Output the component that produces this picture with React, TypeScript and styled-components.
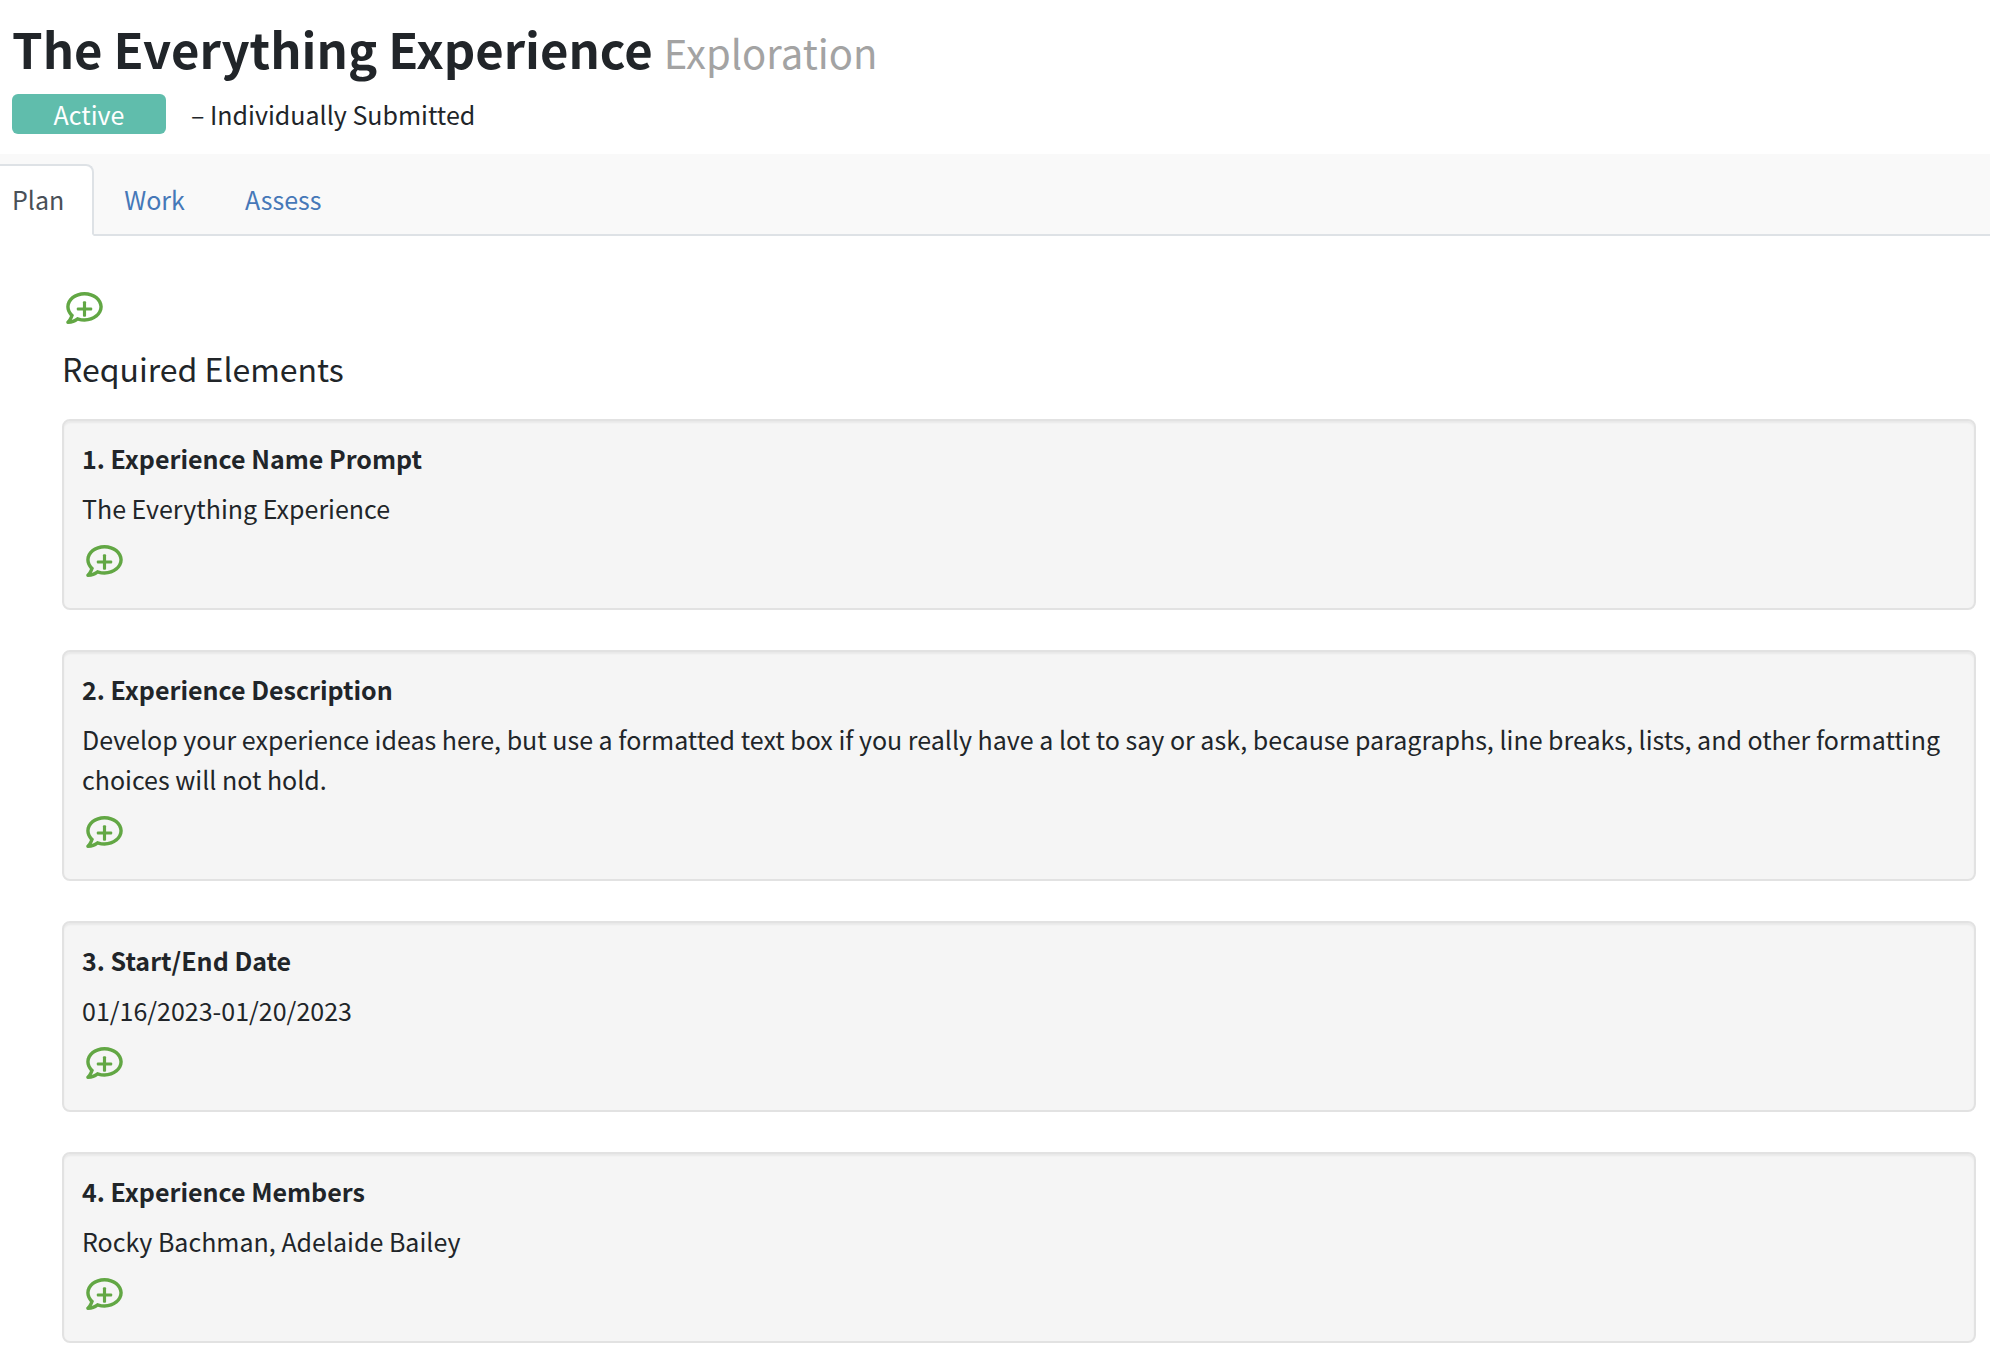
import React, { useState } from "react";
import styled, { createGlobalStyle } from "styled-components";

const GlobalStyle = createGlobalStyle`
  *, *::before, *::after { box-sizing: border-box; }
  body {
    margin: 0;
    background: #fff;
    color: #212529;
    font-family: "Source Sans Pro", "Noto Sans CJK SC", "Noto Sans", sans-serif;
    font-size: 25px;
    line-height: 40px;
  }
`;

const Header = styled.header`
  padding: 18px 12px 20px;
`;

const Title = styled.h1`
  margin: 0 0 16px;
  font-size: 49px;
  font-weight: 600;
  line-height: 60px;
`;

const Kind = styled.small`
  font-size: 40px;
  font-weight: 400;
  line-height: 40px;
  color: #a3a3a3;
`;

const StatusRow = styled.div`
  display: flex;
  align-items: center;
  gap: 25px;
`;

const Badge = styled.span`
  min-width: 154px;
  border-radius: 6px;
  background: #60bdac;
  color: #fff;
  text-align: center;
`;

const Tabs = styled.nav`
  display: flex;
  padding-top: 10px;
  background: #f9f9f9;
  box-shadow: inset 0 -2px #dee2e6;
`;

const Tab = styled.a<{ $active: boolean }>`
  padding: 13px 28px 15px;
  border: 2px solid transparent;
  border-radius: 0 8px 0 0;
  color: #4678b8;
  text-decoration: none;

  &:first-child {
    padding-left: 12px;
    border-left: 0;
  }

  ${({ $active }) =>
    $active &&
    `
    background: #fff;
    border-color: #dee2e6 #dee2e6 #fff;
    color: #495057;
  `}
`;

const Content = styled.main`
  padding: 56px 14px 16px 62px;
`;

const CommentButton = styled.button`
  display: block;
  margin: 0 0 0 4px;
  padding: 0;
  border: 0;
  background: none;
  color: #62a744;
  line-height: 0;
  cursor: pointer;
`;

const SectionTitle = styled.h2`
  margin: 24px 0 31px;
  font-size: 32px;
  font-weight: 400;
  line-height: 40px;
`;

const CardList = styled.div`
  display: flex;
  flex-direction: column;
  gap: 40px;
`;

const Card = styled.section`
  padding: 17px 18px 31px;
  border: 2px solid #e2e2e2;
  border-radius: 8px;
  background: #f5f5f5;
  box-shadow: inset 0 2px 2px rgba(0, 0, 0, 0.05);
`;

const CardTitle = styled.h3`
  margin: 0 0 10px;
  font-size: 25px;
  font-weight: 700;
  line-height: 40px;
`;

const CardText = styled.p`
  margin: 0 0 17px;
`;

const AddComment = () => (
  <CommentButton type="button" aria-label="Add comment">
    <svg width="37" height="32" viewBox="0 32 512 448" fill="currentColor" aria-hidden="true">
      <path d="M256 32C114.6 32 0 125.1 0 240c0 47.6 19.9 91.2 52.9 126.3C38 405.7 7 439.1 6.5 439.5c-6.6 7-8.4 17.2-4.6 26S14.4 480 24 480c61.5 0 110-25.7 139.1-46.3C192 442.8 223.2 448 256 448c141.4 0 256-93.1 256-208S397.4 32 256 32zm0 368c-26.7 0-53.1-4.1-78.4-12.1l-22.7-7.2-19.5 13.8c-14.3 10.1-33.9 21.4-57.5 29 7.3-12.1 14.4-25.7 19.9-40.2l10.6-28.1-20.6-21.8C69.7 314.1 48 282.2 48 240c0-88.2 93.3-160 208-160s208 71.8 208 160-93.3 160-208 160z" />
      <rect x="148" y="248" width="216" height="44" rx="14" />
      <rect x="234" y="162" width="44" height="216" rx="14" />
    </svg>
  </CommentButton>
);

const tabs = ["Plan", "Work", "Assess"];

const elements = [
  { title: "Experience Name Prompt", text: "The Everything Experience" },
  {
    title: "Experience Description",
    text: "Develop your experience ideas here, but use a formatted text box if you really have a lot to say or ask, because paragraphs, line breaks, lists, and other formatting choices will not hold.",
  },
  { title: "Start/End Date", text: "01/16/2023-01/20/2023" },
  { title: "Experience Members", text: "Rocky Bachman, Adelaide Bailey" },
];

export default function App() {
  const [active, setActive] = useState("Plan");

  return (
    <>
      <GlobalStyle />
      <Header>
        <Title>
          The Everything Experience <Kind>Exploration</Kind>
        </Title>
        <StatusRow>
          <Badge>Active</Badge>
          <span>– Individually Submitted</span>
        </StatusRow>
      </Header>
      <Tabs>
        {tabs.map((name) => (
          <Tab
            key={name}
            href={`#${name.toLowerCase()}`}
            $active={name === active}
            aria-current={name === active ? "page" : undefined}
            onClick={() => setActive(name)}
          >
            {name}
          </Tab>
        ))}
      </Tabs>
      <Content>
        <AddComment />
        <SectionTitle>Required Elements</SectionTitle>
        <CardList>
          {elements.map(({ title, text }, i) => (
            <Card key={title}>
              <CardTitle>
                {i + 1}. {title}
              </CardTitle>
              <CardText>{text}</CardText>
              <AddComment />
            </Card>
          ))}
        </CardList>
      </Content>
    </>
  );
}
